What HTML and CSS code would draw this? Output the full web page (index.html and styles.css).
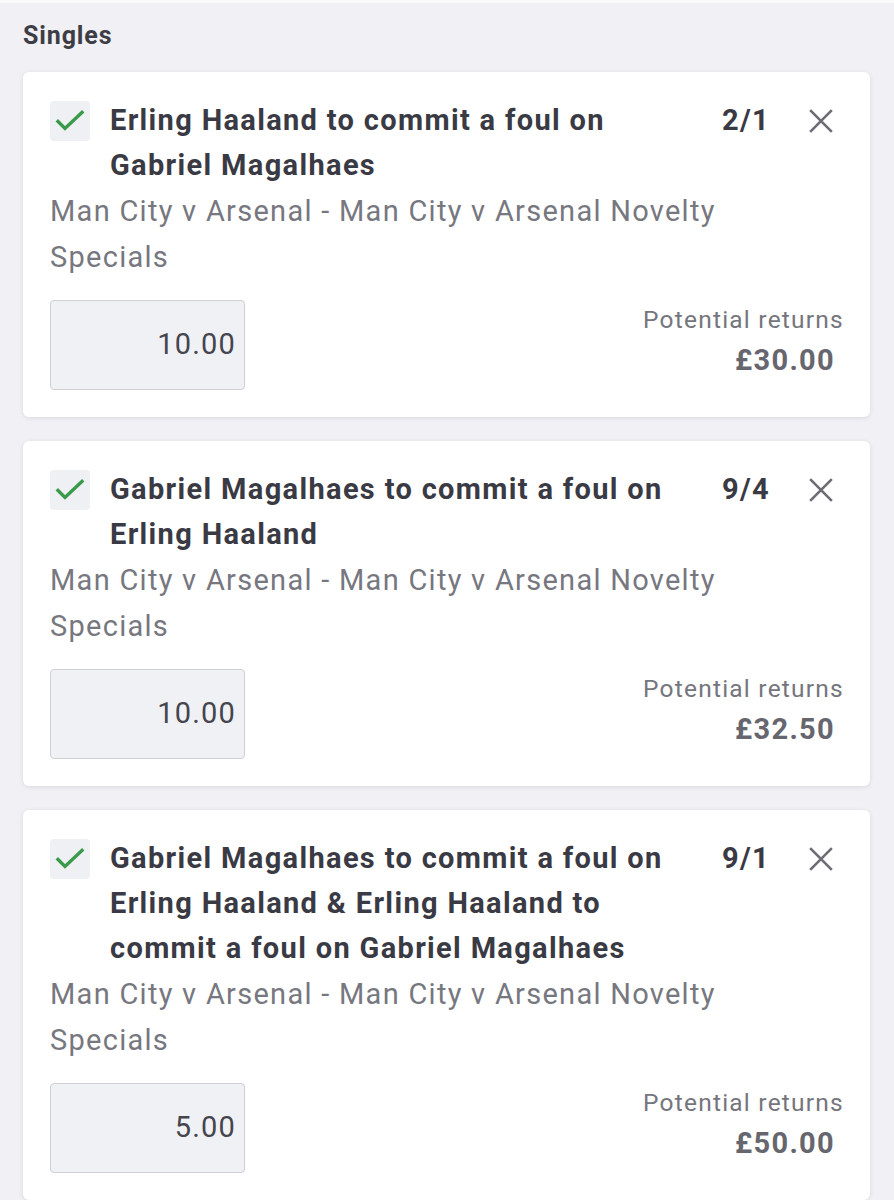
FILE: index.html
```html
<!DOCTYPE html>
<html lang="en">
<head>
<meta charset="utf-8">
<title>Singles</title>
<link rel="stylesheet" href="styles.css">
</head>
<body>
<div class="topline"></div>
<main class="page">
  <h2 class="section">Singles</h2>
  <div class="cards">
    <section class="card">
      <div class="head">
        <div class="check"><svg viewBox="0 0 40 40" width="40" height="40"><path d="M8 20.5 L15 27.5 L32 11.5" fill="none" stroke="#3a9a4b" stroke-width="3.4" stroke-linecap="square"/></svg></div>
        <div class="title">Erling Haaland to commit a foul on Gabriel Magalhaes</div>
        <div class="odds">2/1</div>
        <div class="close"><svg viewBox="0 0 24 24" width="26" height="26"><path d="M2 2 L22 22 M22 2 L2 22" stroke="#6c6c74" stroke-width="2.4" fill="none"/></svg></div>
      </div>
      <div class="sub">Man City v Arsenal - Man City v Arsenal Novelty Specials</div>
      <div class="foot">
        <div class="stake">10.00</div>
        <div class="returns">
          <div class="label">Potential returns</div>
          <div class="amount">£30.00</div>
        </div>
      </div>
    </section>
    <section class="card">
      <div class="head">
        <div class="check"><svg viewBox="0 0 40 40" width="40" height="40"><path d="M8 20.5 L15 27.5 L32 11.5" fill="none" stroke="#3a9a4b" stroke-width="3.4" stroke-linecap="square"/></svg></div>
        <div class="title">Gabriel Magalhaes to commit a foul on Erling Haaland</div>
        <div class="odds">9/4</div>
        <div class="close"><svg viewBox="0 0 24 24" width="26" height="26"><path d="M2 2 L22 22 M22 2 L2 22" stroke="#6c6c74" stroke-width="2.4" fill="none"/></svg></div>
      </div>
      <div class="sub">Man City v Arsenal - Man City v Arsenal Novelty Specials</div>
      <div class="foot">
        <div class="stake">10.00</div>
        <div class="returns">
          <div class="label">Potential returns</div>
          <div class="amount">£32.50</div>
        </div>
      </div>
    </section>
    <section class="card">
      <div class="head">
        <div class="check"><svg viewBox="0 0 40 40" width="40" height="40"><path d="M8 20.5 L15 27.5 L32 11.5" fill="none" stroke="#3a9a4b" stroke-width="3.4" stroke-linecap="square"/></svg></div>
        <div class="title">Gabriel Magalhaes to commit a foul on Erling Haaland &amp; Erling Haaland to commit a foul on Gabriel Magalhaes</div>
        <div class="odds">9/1</div>
        <div class="close"><svg viewBox="0 0 24 24" width="26" height="26"><path d="M2 2 L22 22 M22 2 L2 22" stroke="#6c6c74" stroke-width="2.4" fill="none"/></svg></div>
      </div>
      <div class="sub">Man City v Arsenal - Man City v Arsenal Novelty Specials</div>
      <div class="foot">
        <div class="stake">5.00</div>
        <div class="returns">
          <div class="label">Potential returns</div>
          <div class="amount">£50.00</div>
        </div>
      </div>
    </section>
  </div>
</main>
</body>
</html>
```
FILE: styles.css
```css
html, body {
  margin: 0;
  padding: 0;
}
body {
  background: #f1f1f5;
  font-family: Roboto, "Liberation Sans", Arial, sans-serif;
  color: #3a3a44;
}
.topline {
  height: 3px;
  background: #fafafc;
}
.page {
  padding: 13px 24px 0 23px;
}
.section {
  margin: 0;
  font-size: 25px;
  line-height: 40px;
  font-weight: 700;
  letter-spacing: 0.035em;
  color: #3d3d46;
}
.cards {
  margin-top: 16px;
  display: flex;
  flex-direction: column;
  gap: 24px;
}
.card {
  background: #ffffff;
  border-radius: 6px;
  box-shadow: 0 1px 5px rgba(0, 0, 0, 0.10);
  padding: 26px 27px 27px 27px;
}
.head {
  display: flex;
  align-items: flex-start;
}
.check {
  width: 40px;
  height: 40px;
  flex: none;
  margin-top: 3px;
  margin-right: 20px;
  background: #eef0f3;
  border-radius: 4px;
}
.check svg {
  display: block;
}
.title {
  flex: 1;
  font-size: 29px;
  line-height: 45px;
  font-weight: 700;
  letter-spacing: 0.046em;
  color: #3a3a44;
}
.odds {
  width: 72px;
  flex: none;
  margin-left: 8px;
  margin-right: -1px;
  text-align: right;
  font-size: 29px;
  line-height: 45px;
  font-weight: 700;
  letter-spacing: 0.046em;
  color: #3a3a44;
}
.close {
  width: 44px;
  height: 45px;
  flex: none;
  margin-left: 30px;
  display: flex;
  align-items: center;
  justify-content: center;
}
.close svg {
  display: block;
}
.sub {
  font-size: 29px;
  line-height: 46px;
  letter-spacing: 0.044em;
  color: #77777f;
  padding-right: 70px;
}
.foot {
  margin-top: 20px;
  display: flex;
  justify-content: space-between;
  align-items: flex-start;
}
.stake {
  width: 195px;
  height: 90px;
  box-sizing: border-box;
  border: 1.5px solid #cfd0d5;
  border-radius: 4px;
  background: #f0f1f5;
  text-align: right;
  padding-right: 8px;
  font-size: 29px;
  line-height: 87px;
  letter-spacing: 0.04em;
  color: #45454d;
}
.returns {
  text-align: right;
  margin-right: -1px;
}
.label {
  font-size: 24.5px;
  line-height: 40px;
  letter-spacing: 0.05em;
  color: #75757d;
}
.amount {
  font-size: 29px;
  line-height: 40px;
  font-weight: 700;
  letter-spacing: 0.045em;
  color: #66666e;
  padding-right: 9px;
}
```
